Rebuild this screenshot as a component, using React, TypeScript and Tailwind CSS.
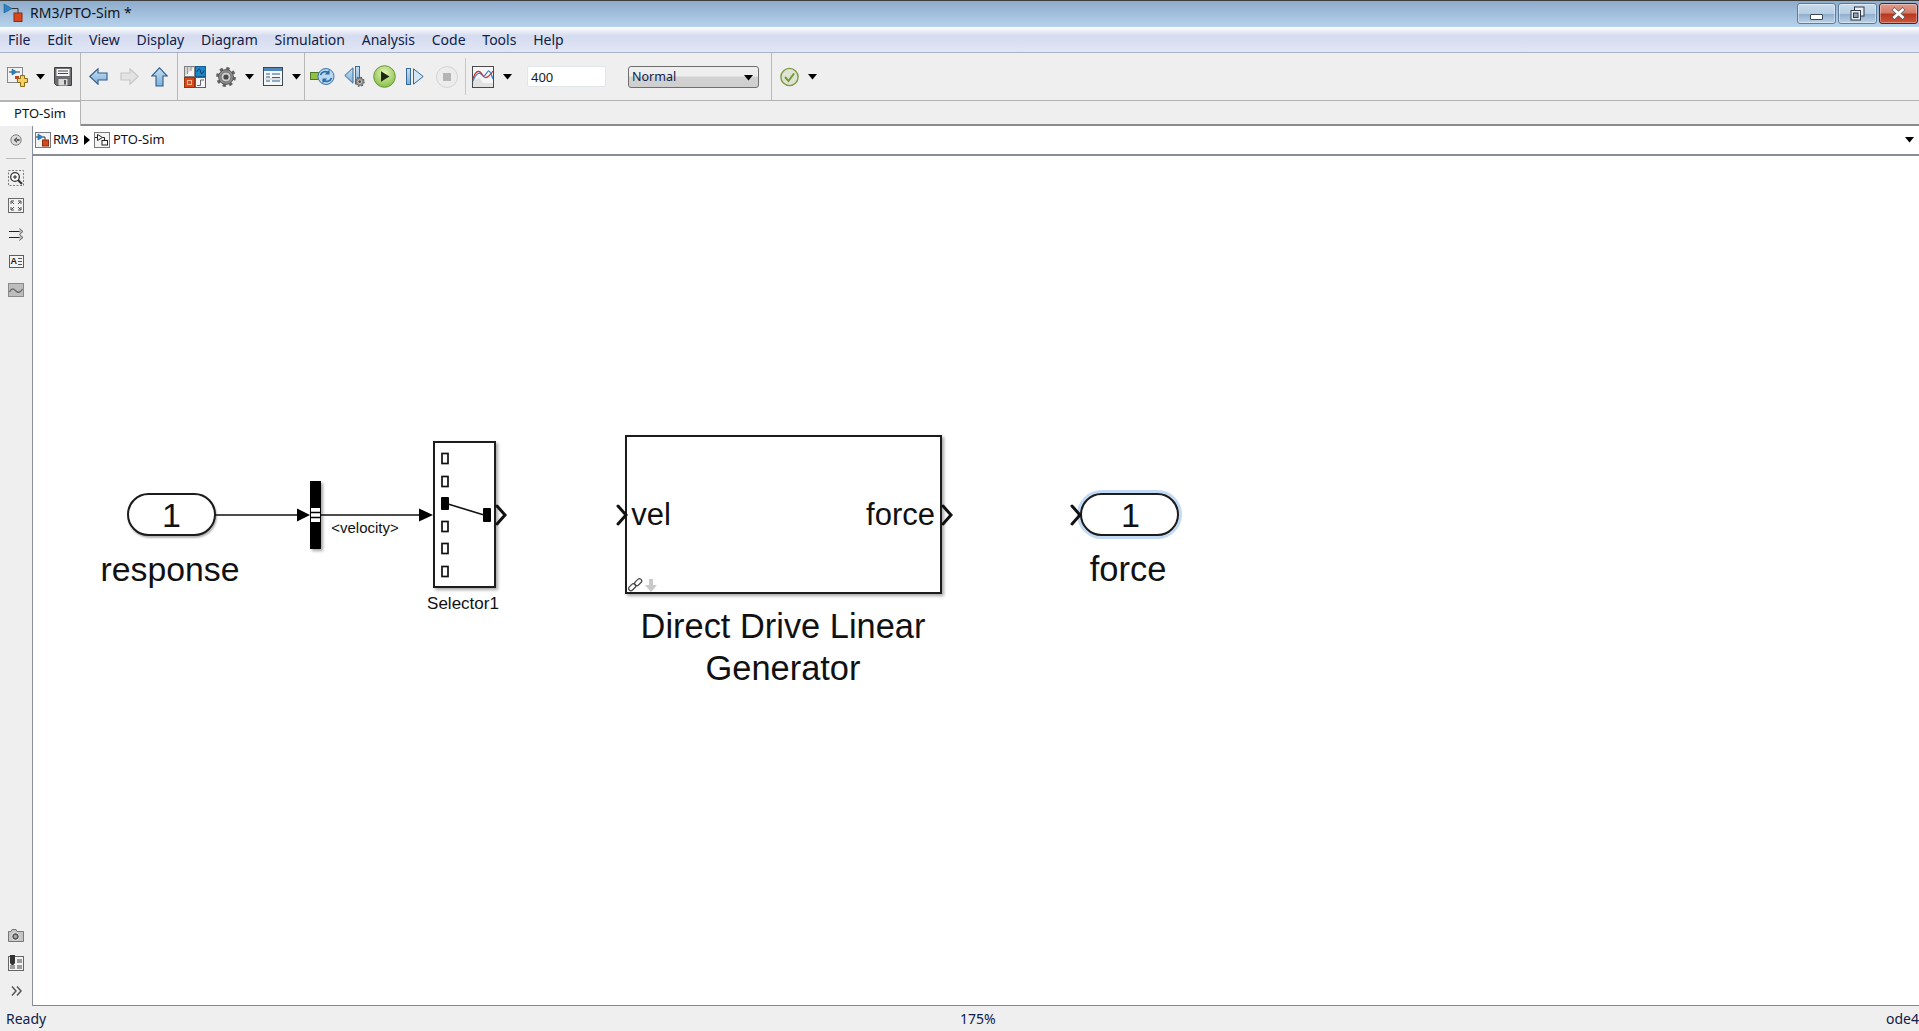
// App.tsx
const MENUS = ["File", "Edit", "View", "Display", "Diagram", "Simulation", "Analysis", "Code", "Tools", "Help"];

function Caret({ className = "" }: { className?: string }) {
  return (
    <svg width="9" height="6" viewBox="0 0 9 6" className={className}>
      <path d="M0 0H9L4.5 5.5Z" fill="#000" />
    </svg>
  );
}

function ModelGlyph({ className = "" }: { className?: string }) {
  return (
    <svg width="16" height="16" viewBox="0 0 16 16" className={className}>
      <rect x="0.5" y="0.5" width="15" height="15" fill="#f2f2f2" stroke="#77797c" />
      <path d="M3 2V8L8 5Z" fill="#2b83c4" stroke="#1d5f90" strokeWidth="0.6" />
      <path d="M1 5H3M8 5H10V8" stroke="#333" fill="none" />
      <rect x="7.5" y="8" width="6" height="6" fill="#d9481c" stroke="#8d2d10" />
    </svg>
  );
}

function SubsystemGlyph({ className = "" }: { className?: string }) {
  return (
    <svg width="16" height="16" viewBox="0 0 16 16" className={className}>
      <rect x="0.5" y="0.5" width="15" height="15" fill="#f4f4f4" stroke="#77797c" />
      <path d="M3.5 2.5V8.5L8.5 5.5Z" fill="#fff" stroke="#222" />
      <path d="M1 5.5H3.5M8.5 5.5H10.5V8.5" stroke="#222" fill="none" />
      <rect x="8" y="8.5" width="5.5" height="4.5" fill="#fff" stroke="#222" />
    </svg>
  );
}

function NewModelIcon() {
  return (
    <svg width="21" height="20" viewBox="0 0 21 20">
      <rect x="0.5" y="0.5" width="15" height="15" fill="#f3f3f3" stroke="#85888c" />
      <path d="M5 2V8L10 5Z" fill="#2b83c4" stroke="#1d5f90" strokeWidth="0.6" />
      <path d="M2 5H5M10 5H13" stroke="#333" />
      <rect x="8" y="9" width="4" height="3" fill="#c8431b" />
      <path d="M13.5 8.5H17.5V11.5H20.5V15.5H17.5V19.5H13.5V15.5H10.5V11.5H13.5Z" fill="#f6cf61" stroke="#8a6a14" />
    </svg>
  );
}

function SaveIcon() {
  return (
    <svg width="18" height="19" viewBox="0 0 18 19">
      <path d="M0.5 0.5H17.5V18.5H2.5L0.5 16.5Z" fill="#6c6e71" stroke="#3f4144" />
      <rect x="2.5" y="2" width="13" height="7" fill="#f6f6f6" />
      <path d="M4 4H14M4 6.5H14" stroke="#46484b" />
      <rect x="4.5" y="12" width="9" height="6.5" fill="#d9d9d9" />
      <rect x="10" y="13" width="2" height="4.5" fill="#55575a" />
    </svg>
  );
}

function ArrowIcon({ dir, muted }: { dir: "left" | "right" | "up"; muted?: boolean }) {
  const fill = muted ? "#e3e3e3" : "url(#navBlue)";
  const stroke = muted ? "#c5c5c5" : "#2f5b85";
  if (dir === "up") {
    return (
      <svg width="17" height="20" viewBox="0 0 17 20">
        <path d="M8.5 0.8L16.3 9H12V19H5V9H0.7Z" fill={fill} stroke={stroke} strokeWidth="1.1" />
      </svg>
    );
  }
  return (
    <svg width="19" height="17" viewBox="0 0 19 17" className={dir === "right" ? "-scale-x-100" : ""}>
      <path d="M0.8 8.5L9 0.8V5H18V12H9V16.2Z" fill={fill} stroke={stroke} strokeWidth="1.1" />
    </svg>
  );
}

function LibraryIcon() {
  return (
    <svg width="22" height="22" viewBox="0 0 22 22">
      <rect x="0.5" y="0.5" width="10" height="10" fill="#d5d5d5" stroke="#808080" />
      <path d="M1 10L10 1V10Z" fill="#f4f4f4" />
      <path d="M3.5 1V8M7 1V5" stroke="#999" />
      <rect x="11.5" y="0.5" width="10" height="10" fill="#1c86c9" stroke="#135f92" />
      <path d="M13 6C14.5 1.5 16 2.5 16.5 5.5S18.5 8.5 20 4.5" fill="none" stroke="#07324f" />
      <rect x="0.5" y="11.5" width="10" height="10" fill="#d9481c" stroke="#99330f" />
      <rect x="3.5" y="14.5" width="4" height="4" fill="none" stroke="#f7b48b" />
      <rect x="11.5" y="11.5" width="10" height="10" fill="#f5f5f5" stroke="#5c5c5c" />
      <path d="M13 19.5H16.5V14H20" fill="none" stroke="#666" />
    </svg>
  );
}

function GearIcon({ size = 20 }: { size?: number }) {
  return (
    <svg width={size} height={size} viewBox="0 0 20 20">
      <circle cx="10" cy="10" r="8.3" fill="none" stroke="#626262" strokeWidth="3.2" strokeDasharray="3.2 3.32" />
      <circle cx="10" cy="10" r="7.4" fill="#8f8f8f" stroke="#555" />
      <circle cx="10" cy="10" r="5" fill="#d0d0d0" stroke="#6c6c6c" />
      <circle cx="10" cy="10" r="2.6" fill="#4a4a4a" />
    </svg>
  );
}

function ExplorerIcon() {
  return (
    <svg width="20" height="19" viewBox="0 0 20 19">
      <rect x="0.5" y="0.5" width="19" height="18" fill="#f5f7f9" stroke="#3f4750" />
      <rect x="1" y="1" width="18" height="3" fill="#4f87b8" />
      <path d="M3 7H7M9 7H17M3 10H7M9 10.5H17M3 14H7M9 14H17" stroke="#2b5f8f" strokeWidth="1.2" />
      <path d="M2 12H18" stroke="#c2c8cf" />
    </svg>
  );
}

function UpdateIcon() {
  return (
    <svg width="25" height="19" viewBox="0 0 25 19">
      <rect x="0.5" y="5.5" width="10" height="7" fill="#93bf46" stroke="#54782a" />
      <circle cx="16" cy="9.5" r="8" fill="#bcd7ee" stroke="#3c74a6" />
      <path d="M10.5 8C11.5 4.5 16 3.5 19 6M21.5 11C20.5 14.5 16 15.5 13 13" fill="none" stroke="#2a6da8" strokeWidth="1.7" />
      <path d="M19.5 2.5V7.5H14.8Z" fill="#2a6da8" />
      <path d="M12.5 16.5V11.5H17.2Z" fill="#2a6da8" />
    </svg>
  );
}

function StepBackIcon() {
  return (
    <svg width="21" height="21" viewBox="0 0 21 21">
      <path d="M0.8 9.5L9 1.8V17.2Z" fill="url(#navBlue)" stroke="#376a96" />
      <rect x="11.5" y="0.5" width="4" height="17" fill="url(#navBlue)" stroke="#376a96" />
      <g transform="translate(10.5 10.5) scale(0.52)">
        <GearIcon />
      </g>
    </svg>
  );
}

function PlayIcon() {
  return (
    <svg width="23" height="23" viewBox="0 0 23 23">
      <circle cx="11.5" cy="11.5" r="10.8" fill="url(#playGreen)" stroke="#6d9a3a" />
      <path d="M8 6.3V16.7L16.5 11.5Z" fill="#1c2a10" />
    </svg>
  );
}

function StepForwardIcon() {
  return (
    <svg width="18" height="17" viewBox="0 0 18 17">
      <rect x="0.5" y="0.5" width="4" height="16" fill="url(#navBlue)" stroke="#376a96" />
      <path d="M7.5 0.8L17.2 8.5L7.5 16.2Z" fill="#d4e5f3" stroke="#376a96" />
    </svg>
  );
}

function StopIcon() {
  return (
    <svg width="22" height="22" viewBox="0 0 22 22">
      <circle cx="11" cy="11" r="10.5" fill="#ececec" stroke="#d3d3d3" />
      <rect x="7" y="7" width="8" height="8" fill="#b5b5b5" />
    </svg>
  );
}

function ScopeIcon() {
  return (
    <svg width="22" height="22" viewBox="0 0 22 22">
      <rect x="0.5" y="0.5" width="21" height="21" fill="#f6f6f6" stroke="#4a4a4a" />
      <path d="M1 15L6 12C8 11 9 14 11 17H21V21H1Z" fill="#e2e2e2" />
      <path d="M1 13C4 3 8 4 10.5 9S17 11 21 5" fill="none" stroke="#d02c2c" strokeWidth="1.2" />
      <path d="M1 15C4 8 7 5 10 9S15 4 17 5 20 11 21 13" fill="none" stroke="#2c7cc8" strokeWidth="1.2" />
    </svg>
  );
}

function CheckIcon() {
  return (
    <svg width="19" height="20" viewBox="0 0 19 20">
      <circle cx="9.5" cy="10" r="8.6" fill="#dfe3d5" stroke="#7c9a40" strokeWidth="1.4" />
      <path d="M5 10L8.5 14L14 6.5" fill="none" stroke="#6f9b2c" strokeWidth="2" />
    </svg>
  );
}

function Separator() {
  return <div className="w-px self-stretch bg-[#b8b8b8]" />;
}

function Toolbar() {
  return (
    <div className="flex h-[48px] items-stretch border-b border-[#b4b4b4] bg-[#efefef]">
      <svg width="0" height="0" className="absolute">
        <defs>
          <linearGradient id="navBlue" x1="0" y1="0" x2="0" y2="1">
            <stop offset="0" stopColor="#c6dff2" />
            <stop offset="1" stopColor="#7fb0da" />
          </linearGradient>
          <radialGradient id="playGreen" cx="0.5" cy="0.35" r="0.7">
            <stop offset="0" stopColor="#e6f5bd" />
            <stop offset="1" stopColor="#7fbb3d" />
          </radialGradient>
        </defs>
      </svg>
      <div className="flex w-[80px] items-center pl-[7px]">
        <NewModelIcon />
        <Caret className="ml-[8px]" />
        <div className="ml-[9px]">
          <SaveIcon />
        </div>
      </div>
      <Separator />
      <div className="flex w-[96px] items-center pl-[8px]">
        <ArrowIcon dir="left" />
        <div className="ml-[12px]">
          <ArrowIcon dir="right" muted />
        </div>
        <div className="ml-[12px]">
          <ArrowIcon dir="up" />
        </div>
      </div>
      <Separator />
      <div className="flex w-[126px] items-center pl-[6px]">
        <LibraryIcon />
        <div className="ml-[10px]">
          <GearIcon />
        </div>
        <Caret className="ml-[9px]" />
        <div className="ml-[9px]">
          <ExplorerIcon />
        </div>
        <Caret className="ml-[9px]" />
      </div>
      <Separator />
      <div className="flex w-[160px] items-center pl-[5px]">
        <UpdateIcon />
        <div className="ml-[9px]">
          <StepBackIcon />
        </div>
        <div className="ml-[8px]">
          <PlayIcon />
        </div>
        <div className="ml-[10px]">
          <StepForwardIcon />
        </div>
        <div className="ml-[12px]">
          <StopIcon />
        </div>
      </div>
      <div className="my-[5px] w-px bg-[#c8c8c8]" />
      <div className="flex w-[305px] items-center pl-[6px]">
        <ScopeIcon />
        <Caret className="ml-[9px]" />
        <div className="ml-[15px] flex h-[21px] w-[79px] items-center rounded-[2px] border border-[#e2e5ea] bg-white pl-[3px] pt-[2px] text-[13px] text-[#1a1a1a]">
          400
        </div>
        <div className="ml-[22px] flex h-[22px] w-[131px] items-center justify-between rounded-[3px] border border-[#6f6f6f] bg-[linear-gradient(#efefef_0%,#ededed_45%,#d2d2d2_50%,#cfcfcf_100%)] pl-[3px] pr-[5px] pt-[2px] text-[12.5px] text-[#10204a]">
          Normal
          <Caret />
        </div>
      </div>
      <Separator />
      <div className="flex items-center pl-[8px]">
        <CheckIcon />
        <Caret className="ml-[9px]" />
      </div>
    </div>
  );
}

function WindowButtons() {
  return (
    <div className="flex h-[21px] gap-[2px] pr-px pt-[2px]">
      <div className="relative h-[21px] w-[39px] rounded-[3px] border border-[#5f7b9b] bg-[linear-gradient(#c9dcee_0%,#b6cde3_50%,#8fadca_52%,#b9d2e8_100%)] shadow-[inset_0_0_0_1px_rgba(255,255,255,0.4)]">
        <div className="absolute left-[12px] top-[10px] h-[6px] w-[13px] rounded-[1px] border border-[#3b4757] bg-white" />
      </div>
      <div className="relative flex h-[21px] w-[39px] items-center justify-center rounded-[3px] border border-[#5f7b9b] bg-[linear-gradient(#c9dcee_0%,#b6cde3_50%,#8fadca_52%,#b9d2e8_100%)] shadow-[inset_0_0_0_1px_rgba(255,255,255,0.4)]">
        <svg width="15" height="15" viewBox="0 0 15 15">
          <rect x="4.5" y="1" width="9.5" height="9" fill="#e8eef4" stroke="#2f3a46" />
          <rect x="1" y="4.5" width="9.5" height="9.5" fill="#e8eef4" stroke="#2f3a46" />
          <rect x="3.5" y="7" width="4.5" height="4.5" fill="#8fa6bc" stroke="#2f3a46" />
        </svg>
      </div>
      <div className="relative flex h-[21px] w-[39px] items-center justify-center rounded-[3px] border border-[#5d1f24] bg-[linear-gradient(#e09b8a_0%,#d47a68_48%,#b7371c_52%,#c9583f_100%)] shadow-[inset_0_0_0_1px_rgba(255,255,255,0.35)]">
        <svg width="15" height="13" viewBox="0 0 15 13">
          <path d="M2 1.5L13 11.5M13 1.5L2 11.5" stroke="#59626c" strokeWidth="4.2" />
          <path d="M2.5 2L12.5 11M12.5 2L2.5 11" stroke="#fff" strokeWidth="2.6" />
        </svg>
      </div>
    </div>
  );
}

function SidebarIcon({ children }: { children: React.ReactNode }) {
  return <div className="flex h-[16px] w-[32px] items-center justify-center">{children}</div>;
}

function Sidebar() {
  return (
    <div className="flex w-[32px] flex-col bg-[#efefef]">
      <div className="mt-[6px]">
        <SidebarIcon>
          <svg width="12" height="12" viewBox="0 0 12 12">
            <circle cx="6" cy="6" r="5.2" fill="#dcdcdc" stroke="#7d7d7d" />
            <path d="M7 3L3.5 6L7 9Z M6.5 5H9.5V7H6.5Z" fill="#555" />
          </svg>
        </SidebarIcon>
      </div>
      <div className="mx-[6px] mt-[10px] h-px bg-[#bcbcbc]" />
      <div className="mt-[11px]">
        <SidebarIcon>
          <svg width="16" height="16" viewBox="0 0 16 16">
            <rect x="0.5" y="0.5" width="15" height="15" fill="none" stroke="#7a7a7a" strokeDasharray="2 1.5" />
            <circle cx="7" cy="7" r="4.3" fill="#fff" stroke="#333" strokeWidth="1.3" />
            <path d="M5 7H9M7 5V9" stroke="#222" />
            <path d="M10 10L14 14" stroke="#333" strokeWidth="2.2" />
          </svg>
        </SidebarIcon>
      </div>
      <div className="mt-[11px]">
        <SidebarIcon>
          <svg width="16" height="15" viewBox="0 0 16 15">
            <rect x="0.5" y="0.5" width="15" height="14" fill="#f2f2f2" stroke="#6a6a6a" />
            <path d="M3 6V3H6M10 3H13V6M13 9V12H10M6 12H3V9M3.5 3.5L6 6M12.5 3.5L10 6M12.5 11.5L10 9M3.5 11.5L6 9" fill="none" stroke="#4b4b4b" />
          </svg>
        </SidebarIcon>
      </div>
      <div className="mt-[13px]">
        <SidebarIcon>
          <svg width="15" height="13" viewBox="0 0 15 13">
            <path d="M0 3.5H12M0 9.5H12" stroke="#222" />
            <path d="M10.5 0.5L14 3.5L10.5 6.5M10.5 6.5L14 9.5L10.5 12.5" fill="#bbb" stroke="#666" />
          </svg>
        </SidebarIcon>
      </div>
      <div className="mt-[11px]">
        <SidebarIcon>
          <div className="relative h-[13px] w-[15px] border border-[#5d5d5d] bg-[#f4f4f4]">
            <span className="absolute left-px top-[-1px] font-['Liberation_Sans',sans-serif] text-[9px] font-bold leading-[12px] text-[#222]">A</span>
            <div className="absolute right-px top-[2px] h-[7px] w-[4px] border-y border-[#555]" />
            <div className="absolute right-px top-[5px] h-px w-[4px] bg-[#555]" />
          </div>
        </SidebarIcon>
      </div>
      <div className="mt-[13px]">
        <SidebarIcon>
          <svg width="16" height="14" viewBox="0 0 16 14">
            <rect x="0.5" y="0.5" width="15" height="13" fill="#bdbdbd" stroke="#8a8a8a" />
            <path d="M1.5 9C4 4 6 6 8 8S12 10 14.5 6" fill="none" stroke="#666" strokeWidth="1.3" />
          </svg>
        </SidebarIcon>
      </div>
      <div className="mt-auto">
        <SidebarIcon>
          <svg width="16" height="13" viewBox="0 0 16 13">
            <path d="M0.5 2.5H3L4 0.5H8L9 2.5H15.5V12.5H0.5Z" fill="#c6c6c6" stroke="#777" />
            <circle cx="7.5" cy="7.5" r="3.8" fill="#555" stroke="#eee" />
            <circle cx="7.5" cy="7.5" r="1.7" fill="#aaa" />
          </svg>
        </SidebarIcon>
      </div>
      <div className="mt-[12px]">
        <SidebarIcon>
          <svg width="16" height="16" viewBox="0 0 16 16">
            <rect x="0.5" y="1.5" width="15" height="14" fill="#f2f2f2" stroke="#666" />
            <path d="M2 0H7V8L4.5 11L2 8Z" fill="#333" />
            <rect x="9" y="4" width="5" height="4" fill="#9d9d9d" />
            <rect x="2" y="10" width="5" height="4" fill="#9d9d9d" />
            <rect x="9" y="10" width="5" height="4" fill="#9d9d9d" />
          </svg>
        </SidebarIcon>
      </div>
      <div className="mb-[7px] mt-[12px]">
        <SidebarIcon>
          <svg width="11" height="10" viewBox="0 0 11 10">
            <path d="M1 0.5L5 5L1 9.5M6 0.5L10 5L6 9.5" fill="none" stroke="#565656" strokeWidth="1.5" />
          </svg>
        </SidebarIcon>
      </div>
    </div>
  );
}

// Chevron port drawn at the block edge
function Chevron({ x }: { x: number }) {
  return <path d={`M${x} 506L${x + 8} 515L${x} 524`} fill="none" stroke="#111" strokeWidth="3" strokeLinecap="round" />;
}

function Wires() {
  const portRows = [453, 476, 521, 543, 566];
  return (
    <svg viewBox="33 156 1886 850" className="absolute left-0 top-0 h-[850px] w-[1886px]">
      <defs>
        <filter id="blockShadow" x="-50%" y="-20%" width="200%" height="140%">
          <feDropShadow dx="2" dy="2" stdDeviation="1.5" floodColor="#000" floodOpacity="0.35" />
        </filter>
      </defs>

      <path d="M215 515H298" stroke="#111" strokeWidth="1.5" />
      <path d="M297 508.5L310 515L297 521.5Z" fill="#000" />
      <rect x="310" y="481" width="11" height="68" fill="#000" filter="url(#blockShadow)" />
      <rect x="311" y="508" width="9" height="14" fill="#fff" />
      <path d="M311 512.5H320M311 517.5H320" stroke="#000" strokeWidth="1.4" />
      <path d="M321 515H420" stroke="#111" strokeWidth="1.5" />
      <path d="M419 508.5L433 515L419 521.5Z" fill="#000" />

      {portRows.map((y) => (
        <rect key={y} x="442" y={y + 0.5} width="6" height="10" fill="#fff" stroke="#111" strokeWidth="1.7" />
      ))}
      <rect x="441" y="497" width="8" height="13" rx="1" fill="#000" />
      <rect x="483" y="508" width="8" height="14" rx="1" fill="#000" />
      <path d="M448 504L484 515" stroke="#111" strokeWidth="1.6" />
      <Chevron x={497} />

      <Chevron x={618} />
      <Chevron x={943} />
      <Chevron x={1072} />

      {/* library link badge */}
      <g fill="none" stroke="#444" strokeWidth="1.2">
        <rect x="628" y="585" width="8" height="4.5" rx="2.2" transform="rotate(-45 632 587)" />
        <rect x="634" y="580" width="8" height="4.5" rx="2.2" transform="rotate(-45 638 582)" />
      </g>
      <path d="M649 579H653V585H657L651 592L645 585H649Z" fill="#c9c9c9" />
    </svg>
  );
}

function Label({ x, y, w, size, children }: { x: number; y: number; w: number; size: string; children: React.ReactNode }) {
  return (
    <div
      className={`absolute whitespace-nowrap text-center font-['Liberation_Sans',Arial,sans-serif] text-[#111] ${size}`}
      style={{ left: x - 33, top: y - 156, width: w }}
    >
      {children}
    </div>
  );
}

function Diagram() {
  return (
    <div className="relative min-h-0 flex-1 overflow-hidden border-b border-[#7f8791] bg-white">
      {/* blocks, positioned on the model canvas */}
      <div className="absolute left-[94px] top-[337px] flex h-[43px] w-[89px] items-center justify-center rounded-full border-2 border-[#1c1c1c] bg-white font-['Liberation_Sans',sans-serif] text-[34px] leading-none text-[#111] shadow-[1px_2px_2px_rgba(0,0,0,0.3)]">
        1
      </div>
      <div className="absolute left-[400px] top-[285px] h-[147px] w-[63px] border-2 border-[#1c1c1c] bg-white shadow-[2px_2px_3px_rgba(0,0,0,0.35)]" />
      <div className="absolute left-[592px] top-[279px] h-[159px] w-[317px] border-2 border-[#1c1c1c] bg-white shadow-[2px_2px_3px_rgba(0,0,0,0.35)]" />
      <div className="absolute left-[1047px] top-[337px] flex h-[43px] w-[99px] items-center justify-center rounded-full border-2 border-[#1c1c1c] bg-white pl-[2px] font-['Liberation_Sans',sans-serif] text-[34px] leading-none text-[#111] shadow-[0_0_0_3px_#c3daf5]">
        1
      </div>

      <Wires />

      <Label x={70} y={549} w={200} size="text-[33.8px] leading-[40px]">response</Label>
      <Label x={320} y={519} w={90} size="text-[15px] leading-[18px]">&lt;velocity&gt;</Label>
      <Label x={413} y={594} w={100} size="text-[17px] leading-[20px]">Selector1</Label>
      <Label x={631} y={497} w={40} size="text-[31px] leading-[36px]">vel</Label>
      <Label x={861} y={497} w={79} size="text-[31px] leading-[36px]">force</Label>
      <Label x={583} y={605} w={400} size="text-[34.4px] leading-[42px]">
        Direct Drive Linear
        <br />
        Generator
      </Label>
      <Label x={1028} y={549} w={200} size="text-[34.5px] leading-[40px]">force</Label>
    </div>
  );
}

export default function App() {
  return (
    <div className="flex h-[1031px] w-[1919px] flex-col overflow-hidden bg-[#efefef] font-['Noto_Sans',sans-serif] text-[#111]">
      {/* title bar */}
      <div className="flex h-[27px] items-start justify-between border-t border-[#3d3d3d] bg-[linear-gradient(#8eaccb,#b6d2ec)]">
        <div className="flex items-center pl-[3px] pt-[2px]">
          <svg width="20" height="20" viewBox="0 0 20 20">
            <path d="M1 1V10L9 5.5Z" fill="#2b83c4" stroke="#1d5f90" strokeWidth="0.6" />
            <path d="M9 5.5H15V10" fill="none" stroke="#333" />
            <rect x="11" y="10" width="8" height="8.5" fill="#d9481c" stroke="#8d2d10" />
          </svg>
          <span className="ml-[7px] text-[14px] leading-[20px] text-[#10141a]">RM3/PTO-Sim *</span>
        </div>
        <WindowButtons />
      </div>

      {/* menu bar */}
      <div className="flex h-[26px] items-center gap-[16.8px] border-b border-[#a9b3c6] bg-[linear-gradient(#ffffff_0%,#d6dcef_35%,#e0e6f5_100%)] pl-[8px] text-[14px] text-[#10204a]">
        {MENUS.map((m) => (
          <span key={m}>{m}</span>
        ))}
      </div>

      <Toolbar />

      {/* tab strip */}
      <div className="flex h-[25px] border-b-2 border-[#8a8a8a] bg-[#efefef]">
        <div className="flex h-[25px] w-[81px] items-center justify-center border-r border-t border-[#b4b4b4] bg-white text-[13px] text-[#111]">
          PTO-Sim
        </div>
      </div>

      {/* editor area */}
      <div className="flex min-h-0 flex-1">
        <Sidebar />
        <div className="flex min-w-0 flex-1 flex-col border-l border-[#87909c]">
          <div className="flex h-[30px] items-center border-b-2 border-[#878c96] bg-white pl-[2px] pr-[5px] text-[13px] text-[#0d1224]">
            <ModelGlyph />
            <span className="ml-[2px] tracking-[-0.8px]">RM3</span>
            <svg width="6" height="10" viewBox="0 0 6 10" className="ml-[6px]">
              <path d="M0 0L6 5L0 10Z" fill="#000" />
            </svg>
            <SubsystemGlyph className="ml-[4px]" />
            <span className="ml-[3px]">PTO-Sim</span>
            <Caret className="ml-auto" />
          </div>
          <Diagram />
        </div>
      </div>

      {/* status bar */}
      <div className="relative flex h-[25px] items-center justify-between bg-[#efefef] pl-[6px] text-[14px] text-[#10204a]">
        <span>Ready</span>
        <span className="absolute left-[960px]">175%</span>
        <span>ode4</span>
      </div>
    </div>
  );
}
